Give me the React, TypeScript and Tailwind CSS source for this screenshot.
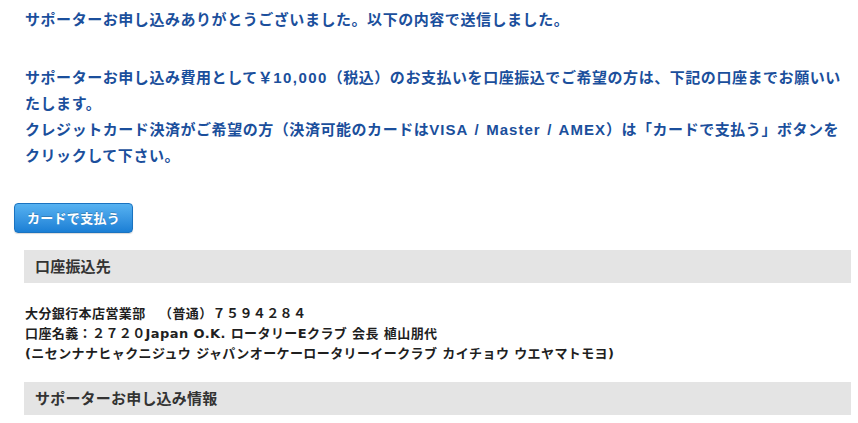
import React from "react";

export default function App() {
  const blueFont = { fontFamily: '"Liberation Sans", "Noto Sans CJK JP", sans-serif' };
  const bankFont = { fontFamily: '"DejaVu Sans", "Noto Sans CJK JP", sans-serif' };
  const jp = { fontFamily: '"Noto Sans CJK JP", "Noto Sans", sans-serif' };
  return (
    <div className="w-[858px] h-[423px] bg-white overflow-hidden pl-[14px]" style={jp}>
      <div className="pl-[11px] text-[#1b4f9c] font-bold text-[15px] tracking-[0.55px] leading-[26px]" style={blueFont}>
        <p className="pt-[7px]">サポーターお申し込みありがとうございました。以下の内容で送信しました。</p>
        <p className="mt-[32px] whitespace-nowrap">
          サポーターお申し込み費用として￥<span className="tracking-[1.4px]">10,000</span>（税込）のお支払いを口座振込でご希望の方は、下記の口座までお願いい
          <br />
          たします。
          <br />
          クレジットカード決済がご希望の方（決済可能のカードは<span className="tracking-[1px] [word-spacing:1.5px]">VISA / Master / AMEX</span>）は「カードで支払う」ボタンを
          <br />
          クリックして下さい。
        </p>
      </div>
      <button className="mt-[34px] w-[119px] h-[30px] rounded-[4px] border border-[#1a73c0] bg-gradient-to-b from-[#56b2f1] to-[#1a7fd5] text-white text-[13px] font-bold tracking-[0.3px] [text-shadow:0_-1px_0_rgba(0,0,0,0.2)] shadow-[0_1px_1px_rgba(0,0,0,0.15)]">
        カードで支払う
      </button>
      <div className="ml-[10px] mr-[7px] mt-[17px] h-[33px] bg-[#e4e4e4] flex items-center pl-[11px] text-[15px] font-bold text-[#333] tracking-[0.2px]">
        口座振込先
      </div>
      <div className="ml-[11px] mt-[21px] text-[13px] font-bold text-[#1f1f1f] leading-[20px] tracking-[0.4px] whitespace-nowrap [text-spacing-trim:space-all]" style={bankFont}>
        <p>
          大分銀行本店営業部<span className="inline-block w-[13.4px]"></span>（普通）７５９４２８４
        </p>
        <p>口座名義：２７２０Japan O.K. ロータリーEクラブ 会長 植山朋代</p>
        <p>(ニセンナナヒャクニジュウ ジャパンオーケーロータリーイークラブ カイチョウ ウエヤマトモヨ)</p>
      </div>
      <div className="ml-[10px] mr-[7px] mt-[18px] h-[33px] bg-[#e4e4e4] flex items-center pl-[11px] text-[15px] font-bold text-[#333] tracking-[0.2px]">
        サポーターお申し込み情報
      </div>
    </div>
  );
}
